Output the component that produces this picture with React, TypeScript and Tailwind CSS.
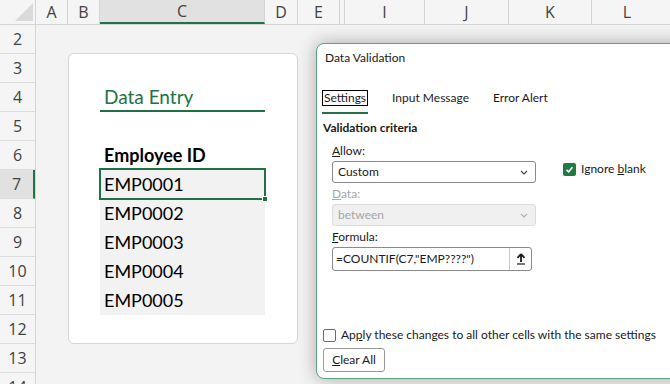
import React from "react";

const headerCols = [
  { label: "A", w: "w-[32px]" },
  { label: "B", w: "w-[32px]" },
  { label: "C", w: "w-[165px]", active: true },
  { label: "D", w: "w-[33px]" },
  { label: "E", w: "w-[42px]" },
  { label: "", w: "w-[5px]" },
  { label: "I", w: "w-[80px]" },
  { label: "J", w: "w-[84px]" },
  { label: "K", w: "w-[83px]" },
];

const rows = [2, 3, 4, 5, 6, 7, 8, 9, 10, 11, 12, 13, 14];
const ids = ["EMP0001", "EMP0002", "EMP0003", "EMP0004", "EMP0005"];

function Chevron({ color = "#444" }: { color?: string }) {
  return (
    <svg width="8" height="5" viewBox="0 0 8 5" className="shrink-0">
      <polyline points="1,1 4,4 7,1" fill="none" stroke={color} strokeWidth="1.2" />
    </svg>
  );
}

export default function App() {
  return (
    <div className="relative w-[670px] h-[384px] overflow-hidden bg-[#f3f3f3] font-['Lato',sans-serif]">
      {/* Column headers */}
      <div className="flex h-[25px] bg-[#f5f5f5] border-b border-[#d4d4d4] text-[16px] text-[#424242] font-['Open_Sans',sans-serif]">
        <div className="w-[36px] shrink-0 border-r border-[#d4d4d4] relative">
          <svg width="20" height="20" viewBox="0 0 20 20" className="absolute left-[14px] top-[2px]">
            <polygon points="19,1 19,19 1,19" fill="#dadada" />
          </svg>
        </div>
        {headerCols.map((c, i) => (
          <div
            key={i}
            className={`${c.w} shrink-0 border-r border-[#d4d4d4] flex items-center justify-center leading-none ${
              c.active ? "bg-[#e1e1e1] border-b-2 border-b-[#217346]" : ""
            }`}
          >
            {c.label}
          </div>
        ))}
        <div className="flex-1 flex items-center justify-center leading-none pr-[8px]">L</div>
      </div>

      <div className="flex">
        {/* Row headers */}
        <div className="w-[36px] shrink-0 bg-[#f5f5f5] border-r border-[#d4d4d4] text-[16px] text-[#424242] font-['Open_Sans',sans-serif]">
          {rows.map((r) => (
            <div
              key={r}
              className={`h-[29px] border-b border-[#dcdcdc] flex items-center justify-center leading-none ${
                r === 7 ? "bg-[#e1e1e1] border-r-2 border-r-[#217346]" : ""
              }`}
            >
              {r}
            </div>
          ))}
        </div>

        {/* Cells */}
        <div className="flex-1">
          <div className="ml-[32px] mt-[28px] w-[230px] h-[291px] bg-white border border-[#d6d6d6] rounded-[6px] pl-[31px]">
            <div className="w-[165px]">
              <div className="h-[29px]" />
              <div className="h-[29px] border-b-2 border-[#1e7145] pl-[4px] pt-[2px] text-[19px] leading-[23px] text-[#217346]">
                Data Entry
              </div>
              <div className="h-[29px]" />
              <div className="h-[29px] pl-[4px] flex items-center text-[18px] font-bold text-black">Employee ID</div>
              <div className="bg-[#f2f2f2]">
                {ids.map((id, i) => (
                  <div key={id} className="relative h-[29px] pl-[4px] flex items-center text-[18px] text-black">
                    {id}
                    {i === 0 && (
                      <div className="absolute -top-[2px] -left-[1px] -right-[1px] -bottom-[1px] border-2 border-[#1e7145]">
                        <div className="absolute -right-[4px] -bottom-[4px] w-[6px] h-[6px] bg-[#1e7145] border border-white" />
                      </div>
                    )}
                  </div>
                ))}
              </div>
            </div>
          </div>
        </div>
      </div>

      {/* Data Validation dialog */}
      <div className="absolute left-[316px] top-[43px] w-[380px] h-[336px] bg-white border border-[#5fa47c] rounded-[8px] shadow-[0_0_18px_rgba(0,0,0,0.3)] text-[12px] text-[#1a1a1a]">
        <div className="pl-[8px] pt-[6px] leading-[16px]">Data Validation</div>

        <div className="flex gap-[24px] pl-[5px] mt-[24px] leading-[14px]">
          <div className="flex flex-col">
            <span className="border-[1.5px] border-black px-[1px]">Settings</span>
            <div className="mt-[6px] h-[2px] bg-[#217346]" />
          </div>
          <span className="pt-px">Input Message</span>
          <span className="pt-px">Error Alert</span>
        </div>

        <div className="pl-[6px] mt-[6px] leading-[16px] font-bold">Validation criteria</div>

        <div className="pl-[15px]">
          <div className="mt-[7px] leading-[16px]">
            <span className="underline">A</span>llow:
          </div>
          <div className="flex items-start mt-[2px]">
            <div className="w-[204px] h-[22px] border border-[#8a8a8a] rounded-[3px] flex items-center justify-between pl-[5px] pr-[7px]">
              <span>Custom</span>
              <Chevron />
            </div>
            <div className="ml-[27px] mt-[2px] w-[13px] h-[13px] rounded-[2px] bg-[#1f7a43] flex items-center justify-center">
              <svg width="9" height="9" viewBox="0 0 9 9">
                <polyline points="1.5,4.8 3.6,6.8 7.5,2.2" fill="none" stroke="white" strokeWidth="1.6" />
              </svg>
            </div>
            <span className="ml-[5px] leading-[16px]">
              Ignore <span className="underline">b</span>lank
            </span>
          </div>

          <div className="mt-[3px] leading-[16px] text-[#a6a6a6]">
            <span className="underline">D</span>ata:
          </div>
          <div className="mt-[2px] w-[204px] h-[22px] border border-[#dcdcdc] bg-[#f0f0f0] rounded-[3px] flex items-center justify-between pl-[5px] pr-[7px] text-[#a6a6a6]">
            <span>between</span>
            <Chevron color="#b0b0b0" />
          </div>

          <div className="mt-[3px] leading-[16px]">
            <span className="underline">F</span>ormula:
          </div>
          <div className="mt-[2px] w-[200px] h-[24px] border border-[#8a8a8a] rounded-[3px] flex items-center">
            <span className="flex-1 pl-[3px]">=COUNTIF(C7,"EMP????")</span>
            <div className="w-[22px] h-full border-l border-[#c8c8c8] flex items-center justify-center">
              <svg width="10" height="12" viewBox="0 0 10 12">
                <path d="M5 1 L1.5 4.8 M5 1 L8.5 4.8 M5 1 V9" fill="none" stroke="#1a1a1a" strokeWidth="1.8" />
                <line x1="1" y1="11" x2="9" y2="11" stroke="#1a1a1a" strokeWidth="1.2" />
              </svg>
            </div>
          </div>
        </div>

        <div className="pl-[6px] mt-[56px] flex items-center gap-[5px] leading-[16px]">
          <div className="w-[13px] h-[13px] rounded-[2px] border border-[#6b6b6b] bg-white" />
          <span>
            Ap<span className="underline">p</span>ly these changes to all other cells with the same settings
          </span>
        </div>

        <div className="ml-[6px] mt-[5px] w-[62px] h-[24px] border border-[#9a9a9a] rounded-[3px] flex items-center justify-center">
          <span className="underline">C</span>lear All
        </div>
      </div>
    </div>
  );
}
